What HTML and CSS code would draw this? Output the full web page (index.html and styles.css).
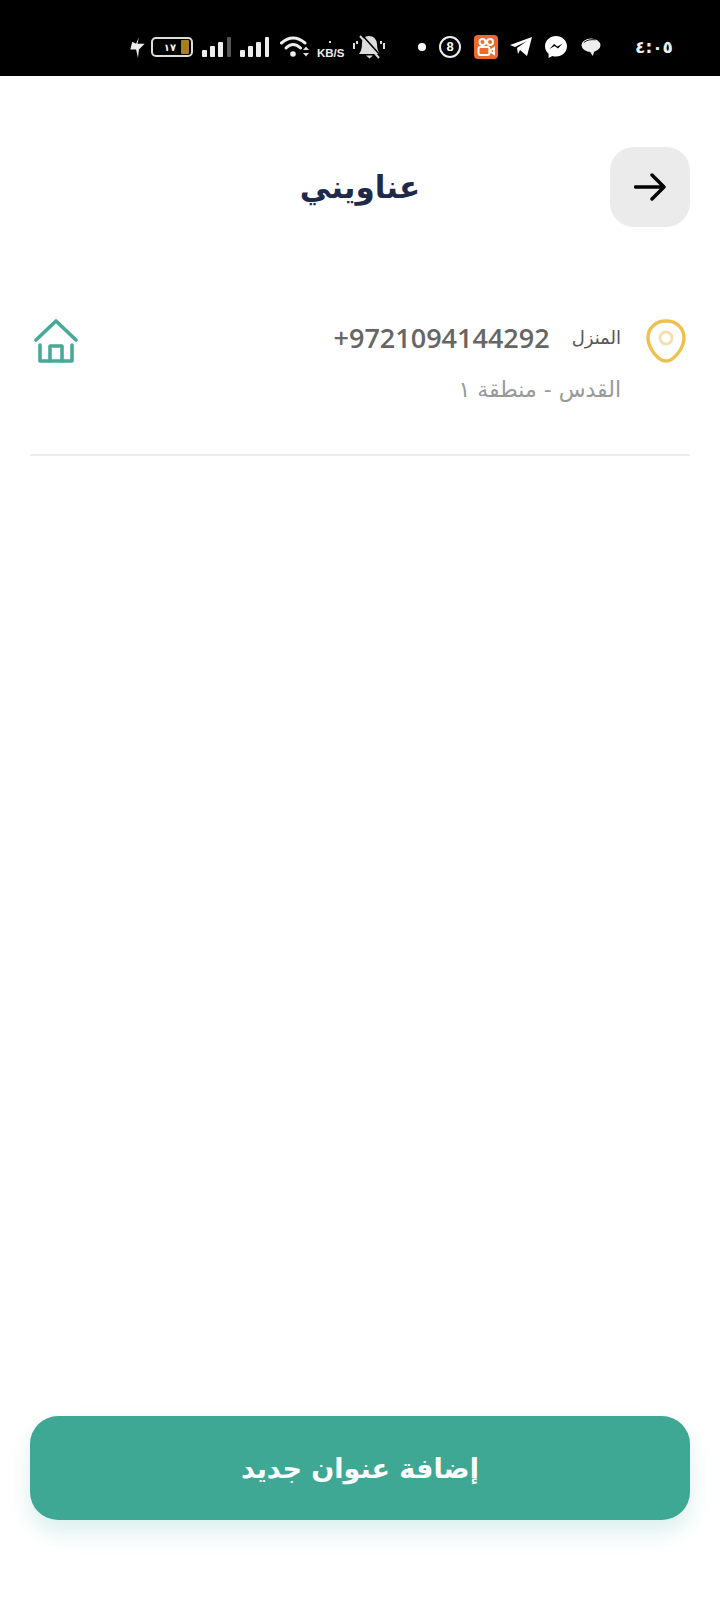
FILE: index.html
```html
<!DOCTYPE html>
<html lang="ar" dir="rtl">
<head>
  <meta charset="UTF-8" />
  <meta name="viewport" content="width=device-width, initial-scale=1.0"/>
  <title>عناويني</title>
  <link rel="stylesheet" href="styles.css">
</head>
<body>
  <div class="statusbar" dir="ltr">
    <svg class="st-flash" viewBox="0 0 15 22"><path d="M9 0 L7.500 7 L15 7 L9 13 L8 22 L6 13 L0 13 L2 5 L6 7 Z" fill="#eee"/></svg>
    <div class="st-battery"><span class="st-batt-num">١٧</span><span class="st-batt-fill"></span></div>
    <svg class="st-signal st-signal-a" viewBox="0 0 30 22"><g fill="#eee"><rect x="0" y="14" width="5" height="7" rx="1"/><rect x="8" y="10" width="5" height="11" rx="1"/><rect x="16" y="6" width="5" height="15" rx="1"/></g><rect x="25" y="1" width="4" height="20" rx="1" fill="#555"/></svg>
    <svg class="st-signal st-signal-b" viewBox="0 0 30 22"><g fill="#eee"><rect x="0" y="14" width="5" height="7" rx="1"/><rect x="8" y="10" width="5" height="11" rx="1"/><rect x="16" y="6" width="5" height="15" rx="1"/><rect x="25" y="1" width="4" height="20" rx="1"/></g></svg>
    <svg class="st-wifi" viewBox="0 0 30 24"><g fill="none" stroke="#eee" stroke-width="3" stroke-linecap="round"><path d="M1.500 8 Q13 -2 25 8"/><path d="M6 13 Q13 6 20.500 13"/></g><circle cx="13" cy="19" r="2.800" fill="#eee"/><path d="M23 15 h6 l-3 -3.500 Z M23 18 h6 l-3 3.500 Z" fill="#ddd"/></svg>
    <div class="st-speed"><span class="st-speed-dot"></span>KB/S</div>
    <svg class="st-bell" viewBox="0 0 34 24"><path d="M7 19 Q10 15 10 9 Q10 1 17 1 Q24 1 25 9 Q25 15 28 19 Z" fill="#ddd"/><path d="M14 20.500 h7 l-3.500 3 Z" fill="#ddd"/><path d="M10 0 L29 21" stroke="#000" stroke-width="1.600"/><path d="M8 1 L27 23" stroke="#ddd" stroke-width="2"/><path d="M2 8 v6 M5 6 v3 M32 8 v6 M29 6 v3" stroke="#ddd" stroke-width="2"/></svg>
    <span class="st-dot"></span>
    <span class="st-eight">8</span>
    <svg class="st-app" viewBox="0 0 24 24"><rect width="24" height="24" rx="4" fill="#ee6a2c"/><g fill="none" stroke="#fff" stroke-width="2"><circle cx="8.500" cy="7" r="3"/><circle cx="16" cy="7" r="3"/><rect x="4.500" y="12" width="11" height="8" rx="2"/><path d="M15.500 16 L20 13 V19 Z"/></g></svg>
    <svg class="st-telegram" viewBox="0 0 22 20"><path d="M22 0 L17 19 L10 13 L8 17 L7 11 L17 4 L5 10 L0 8 Z" fill="#fff"/></svg>
    <svg class="st-messenger" viewBox="0 0 22 22"><path d="M11 0 C4.900 0 0 4.500 0 10.300 C0 13.400 1.400 16 3.600 17.800 V22 L7.400 20 C8.500 20.400 9.700 20.600 11 20.600 C17.100 20.600 22 16.100 22 10.300 C22 4.500 17.100 0 11 0 Z" fill="#fff"/><path d="M4.500 13 L9 8 L12.500 10.500 L17.500 7.500 L13 12.500 L9.500 10 Z" fill="#000"/></svg>
    <svg class="st-chat" viewBox="0 0 22 20"><ellipse cx="11" cy="8" rx="10.500" ry="7.500" fill="#eee"/><path d="M9 14 L13 20 L15 14 Z" fill="#eee"/><path d="M3 5 Q8 1 16 2" fill="none" stroke="#000" stroke-width="1"/></svg>
    <span class="st-time">٤:٠٥</span>
  </div>

  <div class="page">
    <div class="header">
      <button class="back-btn">
        <svg viewBox="0 0 32 28"><path d="M1.500 14 H30 M18 2 L30 14 L18 26" fill="none" stroke="#000" stroke-width="3.400" stroke-linecap="round" stroke-linejoin="round"/></svg>
      </button>
      <h1 class="title">عناويني</h1>
    </div>

    <div class="address">
      <svg class="pin" viewBox="0 0 40 44"><path d="M20 2 C9 2 2 9.500 2 19 C2 29 12 42 20 42 C28 42 38 29 38 19 C38 9.500 31 2 20 2 Z" fill="none" stroke="#efc04e" stroke-width="3.400"/><circle cx="20" cy="19" r="6" fill="none" stroke="#f5dfb0" stroke-width="3"/></svg>
      <div class="address-info">
        <div class="address-top">
          <span class="address-name">المنزل</span>
          <span class="address-phone" dir="ltr">+9721094144292</span>
        </div>
        <div class="address-sub">القدس - منطقة ١</div>
      </div>
      <svg class="home" viewBox="0 0 44 44"><g fill="none" stroke="#4aa897" stroke-width="3.600" stroke-linecap="round" stroke-linejoin="round"><path d="M2 21 L22 2 L42 21"/><path d="M6 26 V42 H38 V26"/><path d="M16 42 V27 H28 V42"/></g></svg>
    </div>

    <button class="add-btn">إضافة عنوان جديد</button>
  </div>
</body>
</html>
```

FILE: styles.css
```css
* {
  box-sizing: border-box;
}
body {
  margin: 0;
  height: 1600px;
  background: #fff;
  font-family: "DejaVu Sans", sans-serif;
  display: flex;
  flex-direction: column;
}

/* status bar */
.statusbar {
  height: 76px;
  background: #000;
  display: flex;
  align-items: center;
  padding: 20px 0 2px 130px;
  flex-shrink: 0;
}
.st-flash {
  width: 15px;
  height: 21px;
}
.st-battery {
  width: 42px;
  height: 20px;
  margin-left: 6px;
  border: 2px solid #ddd;
  border-radius: 5px;
  display: flex;
  align-items: center;
  justify-content: flex-end;
  padding: 1px 2px;
  gap: 5px;
}
.st-batt-num {
  color: #eee;
  font-size: 10px;
  font-weight: bold;
}
.st-batt-fill {
  width: 8px;
  height: 100%;
  background: #a57e25;
  border-radius: 1px;
}
.st-signal {
  width: 30px;
  height: 22px;
}
.st-signal-a {
  margin-left: 9px;
}
.st-signal-b {
  margin-left: 8px;
}
.st-wifi {
  width: 30px;
  height: 24px;
  margin-left: 10px;
}
.st-speed {
  position: relative;
  color: #eee;
  font-family: "Liberation Sans", sans-serif;
  font-weight: bold;
  font-size: 11.500px;
  width: 29px;
  margin-left: 7px;
  padding-top: 12px;
  white-space: nowrap;
}
.st-speed-dot {
  position: absolute;
  top: 6px;
  left: 12px;
  width: 2px;
  height: 2px;
  background: #ddd;
}
.st-bell {
  width: 34px;
  height: 24px;
  margin-left: 6px;
}
.st-dot {
  width: 8px;
  height: 8px;
  background: #fff;
  border-radius: 50%;
  margin-left: 32px;
}
.st-eight {
  width: 22px;
  height: 22px;
  margin-left: 13px;
  border: 2px solid #eee;
  border-radius: 50%;
  color: #fff;
  font-family: "Liberation Sans", sans-serif;
  font-weight: bold;
  font-size: 13px;
  line-height: 18px;
  text-align: center;
}
.st-app {
  width: 24px;
  height: 24px;
  margin-left: 13px;
}
.st-telegram {
  width: 22px;
  height: 20px;
  margin-left: 12px;
}
.st-messenger {
  width: 22px;
  height: 22px;
  margin-left: 13px;
}
.st-chat {
  width: 20px;
  height: 18px;
  margin-left: 14px;
}
.st-time {
  color: #eee;
  font-size: 17px;
  font-weight: bold;
  margin-left: 34px;
}

/* page */
.page {
  flex: 1;
  display: flex;
  flex-direction: column;
  padding: 71px 30px 80px;
}
.header {
  display: grid;
  grid-template-columns: 80px 1fr 80px;
  align-items: center;
}
.back-btn {
  width: 80px;
  height: 80px;
  background: #ebebeb;
  border: none;
  border-radius: 24px;
  padding: 0;
  display: flex;
  align-items: center;
  justify-content: center;
}
.back-btn svg {
  width: 32px;
  height: 28px;
}
.title {
  margin: 0;
  text-align: center;
  font-size: 31px;
  font-weight: bold;
  color: #1f2a48;
}

.address {
  margin-top: 92px;
  padding: 0 4px;
  height: 137px;
  border-bottom: 2px solid #ececec;
  display: flex;
  align-items: flex-start;
  width: 660px;
}
.pin {
  width: 40px;
  height: 44px;
  flex-shrink: 0;
}
.address-info {
  margin-right: 25px;
}
.address-top {
  display: flex;
  align-items: center;
  gap: 22px;
  height: 36px;
}
.address-name {
  font-size: 18px;
  color: #555;
}
.address-phone {
  font-family: "Open Sans", sans-serif;
  font-size: 27px;
  font-weight: 600;
  color: #666;
}
.address-sub {
  margin-top: 22px;
  font-size: 22px;
  color: #999;
}
.home {
  width: 44px;
  height: 44px;
  margin-right: auto;
}

.add-btn {
  margin-top: auto;
  height: 104px;
  width: 660px;
  background: #3fa894;
  color: #fff;
  border: none;
  border-radius: 28px;
  font-family: "DejaVu Sans", sans-serif;
  font-size: 27px;
  font-weight: bold;
  box-shadow: 0 12px 22px rgba(63, 168, 148, 0.18);
}
```
